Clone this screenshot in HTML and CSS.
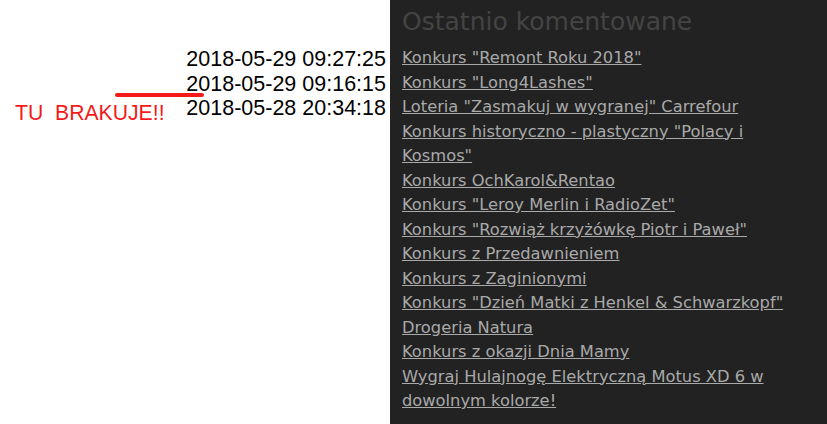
FILE: index.html
```html
<!DOCTYPE html>
<html lang="pl">
<head>
<meta charset="utf-8">
<title>Ostatnio komentowane</title>
<link rel="stylesheet" href="styles.css">
</head>
<body>
<div class="page">
  <div class="dates">
    <div class="date">2018-05-29 09:27:25</div>
    <div class="date">2018-05-29 09:16:15</div>
    <div class="date">2018-05-28 20:34:18</div>
    <div class="mark-line"></div>
    <div class="mark-text">TU&nbsp; BRAKUJE!!</div>
  </div>
  <aside class="panel">
    <h2 class="panel-title">Ostatnio komentowane</h2>
    <ul class="links">
      <li><a href="#">Konkurs "Remont Roku 2018"</a></li>
      <li><a href="#">Konkurs "Long4Lashes"</a></li>
      <li><a href="#">Loteria "Zasmakuj w wygranej" Carrefour</a></li>
      <li><a href="#">Konkurs historyczno - plastyczny "Polacy i Kosmos"</a></li>
      <li><a href="#">Konkurs OchKarol&amp;Rentao</a></li>
      <li><a href="#">Konkurs "Leroy Merlin i RadioZet"</a></li>
      <li><a href="#">Konkurs "Rozwiąż krzyżówkę Piotr i Paweł"</a></li>
      <li><a href="#">Konkurs z Przedawnieniem</a></li>
      <li><a href="#">Konkurs z Zaginionymi</a></li>
      <li><a href="#">Konkurs "Dzień Matki z Henkel &amp; Schwarzkopf"</a></li>
      <li><a href="#">Drogeria Natura</a></li>
      <li><a href="#">Konkurs z okazji Dnia Mamy</a></li>
      <li><a href="#">Wygraj Hulajnogę Elektryczną Motus XD 6 w dowolnym kolorze!</a></li>
    </ul>
  </aside>
</div>
</body>
</html>
```

FILE: styles.css
```css
html, body {
  margin: 0;
  padding: 0;
  background: #ffffff;
  height: 100%;
}

.page {
  display: flex;
  min-height: 424px;
  height: 100%;
}

.dates {
  position: relative;
  width: 390px;
  flex: none;
  box-sizing: border-box;
  padding: 47px 4px 0 0;
  text-align: right;
  font-family: "Liberation Sans", Arial, sans-serif;
  font-size: 21.5px;
  line-height: 24.6px;
  color: #000;
}

.mark-line {
  position: absolute;
  left: 115px;
  top: 93px;
  width: 89px;
  height: 4px;
  border-radius: 2px;
  background: #f41a1a;
}

.mark-text {
  position: absolute;
  left: 15px;
  top: 101px;
  text-align: left;
  font-size: 21.2px;
  color: #f41a1a;
  white-space: nowrap;
}

.panel {
  flex: 1;
  background: #222222;
  box-sizing: border-box;
  padding: 7px 25px 0 12px;
  font-family: "DejaVu Sans", sans-serif;
}

.panel-title {
  margin: 0 0 9px 0;
  font-weight: normal;
  font-size: 25px;
  line-height: 30px;
  color: #444444;
}

.links {
  list-style: none;
  margin: 0;
  padding: 0;
  font-size: 16.3px;
  line-height: 24.5px;
}

.links a {
  color: #a9a9a9;
  text-decoration: underline;
}
```
